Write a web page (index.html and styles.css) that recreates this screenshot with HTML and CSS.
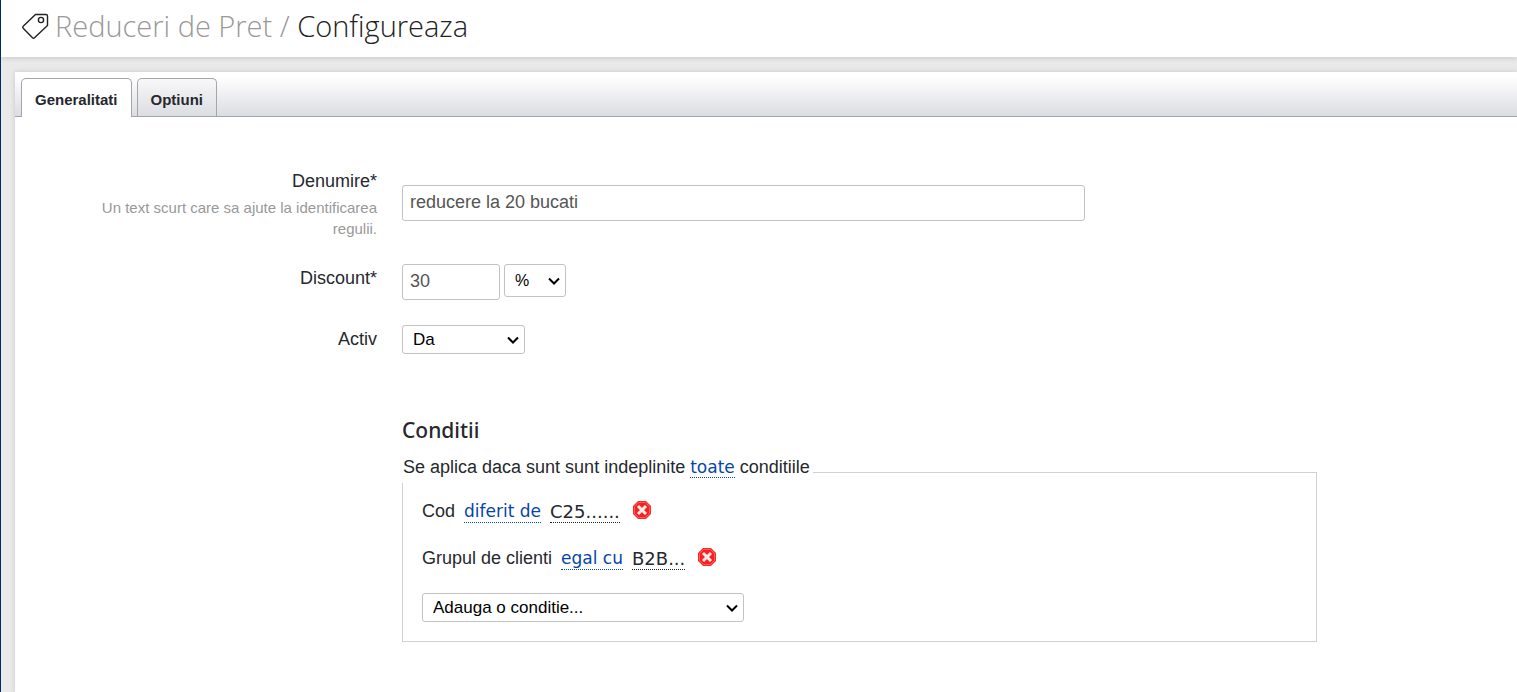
FILE: index.html
```html
<!DOCTYPE html>
<html lang="ro">
<head>
<meta charset="utf-8">
<title>Reduceri de Pret / Configureaza</title>
<link rel="stylesheet" href="styles.css">
</head>
<body>
<header class="page-header">
  <svg class="tag-icon" viewBox="0 0 28 28" aria-hidden="true">
    <path d="M14.500 2.500H25Q26.500 2.500 26.500 4V13.500L13.500 25.800Q12.500 26.800 11.500 25.800L2.200 16.200Q1.200 15.200 2.200 14.200Z"/>
    <circle cx="20" cy="8" r="2.600"/>
  </svg>
  <h1 class="page-title"><a class="crumb" href="#">Reduceri de Pret</a> <span class="crumb">/</span> Configureaza</h1>
</header>
<main class="panel">
  <nav class="tabs" role="tablist">
    <button class="tab tab-active" type="button" role="tab" aria-selected="true">Generalitati</button>
    <button class="tab" type="button" role="tab" aria-selected="false">Optiuni</button>
  </nav>
  <form class="form">
    <div class="row row-name">
      <div class="label">
        <label for="name">Denumire*</label>
        <p class="hint" id="name-hint">Un text scurt care sa ajute la identificarea regulii.</p>
      </div>
      <div class="field field-name"><input class="text-input" id="name" type="text" value="reducere la 20 bucati" aria-describedby="name-hint"></div>
    </div>
    <div class="row row-discount">
      <div class="label"><label for="discount">Discount*</label></div>
      <div class="field">
        <input class="text-input amount" id="discount" type="text" value="30">
        <select class="select unit" aria-label="Tip discount"><option>%</option></select>
      </div>
    </div>
    <div class="row row-active">
      <div class="label"><label for="active">Activ</label></div>
      <div class="field"><select class="select active-select" id="active"><option>Da</option><option>Nu</option></select></div>
    </div>
    <section class="conditions">
      <h2 class="section-title">Conditii</h2>
      <fieldset class="rules">
        <legend class="legend">Se aplica daca sunt sunt indeplinite <a class="pick link" href="#">toate</a> conditiile</legend>
        <div class="rule">
          <span>Cod</span>
          <a class="pick link" href="#">diferit de</a>
          <a class="pick value" href="#">C25......</a>
          <button class="remove" type="button" aria-label="Sterge conditia Cod">
            <svg viewBox="0 0 18 18" aria-hidden="true"><path class="octagon" d="M5 0H13L18 5V13L13 18H5L0 13V5Z"/><path class="inner" d="M5.500 1.500H12.500L16.500 5.500V12.500L12.500 16.500H5.500L1.500 12.500V5.500Z"/><path class="cross" d="M5 5L13 13M13 5L5 13"/></svg>
          </button>
        </div>
        <div class="rule">
          <span>Grupul de clienti</span>
          <a class="pick link" href="#">egal cu</a>
          <a class="pick value" href="#">B2B...</a>
          <button class="remove" type="button" aria-label="Sterge conditia Grupul de clienti">
            <svg viewBox="0 0 18 18" aria-hidden="true"><path class="octagon" d="M5 0H13L18 5V13L13 18H5L0 13V5Z"/><path class="inner" d="M5.500 1.500H12.500L16.500 5.500V12.500L12.500 16.500H5.500L1.500 12.500V5.500Z"/><path class="cross" d="M5 5L13 13M13 5L5 13"/></svg>
          </button>
        </div>
        <select class="select add-select" aria-label="Adauga o conditie"><option>Adauga o conditie...</option></select>
      </fieldset>
    </section>
  </form>
</main>
</body>
</html>
```
FILE: styles.css
```css
* { box-sizing: border-box; }
body {
  margin: 0;
  min-height: 100vh;
  display: flex;
  flex-direction: column;
  border-left: 1px solid #002b66;
  background: #e9e9e9;
  color: #26282d;
  font-family: "Liberation Sans", Arial, sans-serif;
  font-size: 18px;
}
.page-header {
  display: flex;
  align-items: center;
  gap: 6px;
  height: 57px;
  padding: 0 20px 5px;
  background: #fff;
  box-shadow: 0 1px 5px rgba(0, 0, 0, .15);
}
.tag-icon {
  width: 28px;
  height: 28px;
  fill: none;
  stroke: #222;
  stroke-width: 1.4;
}
.page-title {
  margin: 0;
  font: 300 29px/40px "Open Sans", sans-serif;
  color: #222;
}
.crumb { color: #999; text-decoration: none; }
.panel {
  flex: 1;
  margin: 15px 0 0 14px;
  background: #fff;
  box-shadow: 0 0 5px rgba(0, 0, 0, .15);
}
.tabs {
  display: flex;
  align-items: flex-end;
  gap: 5px;
  height: 45px;
  padding-left: 6px;
  border-bottom: 1px solid #a5a6ad;
  background: linear-gradient(#fff 10%, #dcdde2);
}
.tab {
  height: 38px;
  padding: 5px 13px 0;
  border: 1px solid #a5a6ad;
  border-bottom: 0;
  border-radius: 5px 5px 0 0;
  background: linear-gradient(#f8f8f9, #dcdde2);
  color: #26282d;
  font: bold 15px/20px "Liberation Sans", Arial, sans-serif;
}
.tab-active {
  height: 39px;
  margin-bottom: -1px;
  padding-top: 4px;
  background: #fff;
}
.form { padding: 53px 200px 40px 80px; }
.row {
  display: grid;
  grid-template-columns: 282px minmax(0, 1fr);
  column-gap: 25px;
}
.row-name { margin-bottom: 25px; }
.row-discount { margin-bottom: 25px; }
.label { text-align: right; line-height: 22px; }
.hint {
  margin: 5px 0 0;
  color: #999;
  font-size: 15px;
  line-height: 21px;
}
.field { display: flex; align-items: flex-start; gap: 4px; }
.field-name { padding-top: 15px; }
.text-input {
  width: 100%;
  max-width: 683px;
  height: 36px;
  padding: 0 7px 2px;
  border: 1px solid #c3c3c3;
  border-radius: 3px;
  background: #fff;
  color: #555;
  font: 18px "Liberation Sans", Arial, sans-serif;
}
.amount { width: 98px; }
.select {
  height: 29px;
  padding: 0 22px 0 10px;
  appearance: none;
  border: 1px solid #c3c3c3;
  border-radius: 3px;
  background: #fff url("data:image/svg+xml,%3Csvg xmlns='http://www.w3.org/2000/svg' width='12' height='8'%3E%3Cpath d='M1 1.500L6 6.500L11 1.500' fill='none' stroke='black' stroke-width='2'/%3E%3C/svg%3E") no-repeat right 5px center;
  color: #000;
  font: 17px "Liberation Sans", Arial, sans-serif;
}
.unit { width: 62px; height: 33px; font-size: 16px; }
.active-select { width: 123px; }
.row-discount .label, .row-active .label { padding-top: 3px; }
.conditions { margin: 61px 0 0 307px; }
.section-title {
  margin: 0 0 16px;
  font: 500 21px/30px "Noto Sans", "Open Sans", sans-serif;
}
.rules {
  min-width: 0;
  margin: 0;
  padding: 15px 19px 19px;
  border: 1px solid #d0d0d4;
}
.legend {
  height: 22px;
  margin-left: -20px;
  padding: 0 3px 0 1px;
  background: #fff;
  line-height: 13px;
}
.pick {
  border-bottom: 1px dotted #222;
  color: #26282d;
  font-family: "DejaVu Sans", Verdana, sans-serif;
  font-size: 17px;
  text-decoration: none;
}
.link { border-color: #0645ad; color: #0645ad; }
.value { font-size: 18px; }
.rule {
  display: flex;
  align-items: center;
  gap: 9px;
  height: 27px;
  margin-bottom: 20px;
}
.rule .pick { line-height: 21px; }
.remove {
  display: flex;
  margin: 0 0 3px 4px;
  padding: 0;
  border: 0;
  background: none;
}
.remove svg { width: 18px; height: 18px; }
.octagon { fill: #ed3030; }
.inner { fill: #fb1f1f; stroke: #ff5b5b; }
.cross { fill: none; stroke: #ffecec; stroke-width: 3; }
.add-select { display: block; width: 322px; max-width: 100%; margin-top: 21px; }
```
